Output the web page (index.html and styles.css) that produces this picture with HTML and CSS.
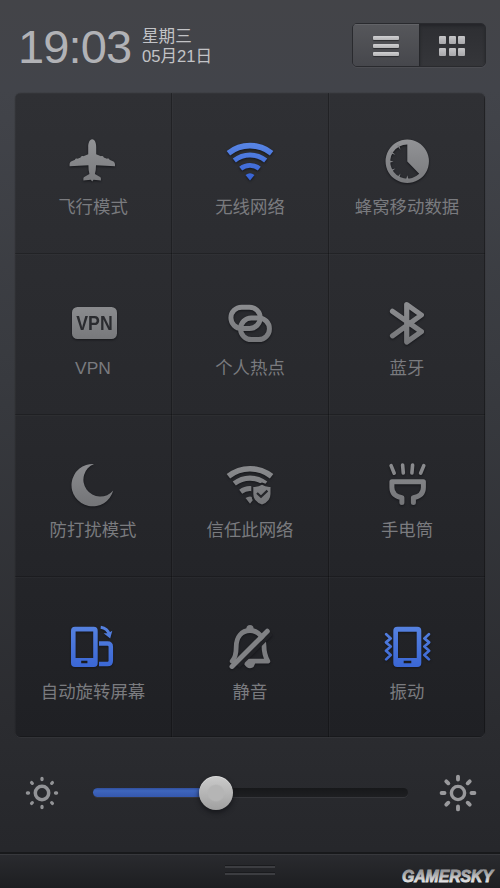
FILE: index.html
```html
<!DOCTYPE html>
<html lang="zh-CN">
<head>
<meta charset="utf-8">
<title>控制中心</title>
<link rel="stylesheet" href="styles.css">
</head>
<body>
<svg class="defs" width="0" height="0" aria-hidden="true">
  <defs>
    <linearGradient id="g1" gradientUnits="userSpaceOnUse" x1="0" y1="139" x2="0" y2="184"><stop offset="0" stop-color="#929396"/><stop offset="1" stop-color="#78797c"/></linearGradient>
    <linearGradient id="g2" gradientUnits="userSpaceOnUse" x1="0" y1="301" x2="0" y2="345"><stop offset="0" stop-color="#8e8f92"/><stop offset="1" stop-color="#747578"/></linearGradient>
    <linearGradient id="g3" gradientUnits="userSpaceOnUse" x1="0" y1="463" x2="0" y2="507"><stop offset="0" stop-color="#8b8c8f"/><stop offset="1" stop-color="#737477"/></linearGradient>
    <linearGradient id="b1" gradientUnits="userSpaceOnUse" x1="0" y1="141" x2="0" y2="181"><stop offset="0" stop-color="#5b88e6"/><stop offset="1" stop-color="#3560d2"/></linearGradient>
    <linearGradient id="b4" gradientUnits="userSpaceOnUse" x1="0" y1="626" x2="0" y2="668"><stop offset="0" stop-color="#5682e0"/><stop offset="1" stop-color="#3a66d4"/></linearGradient>
  </defs>
</svg>
<main class="screen">
  <header class="header">
    <div class="time">19:03</div>
    <div class="date"><span>星期三</span><span>05月21日</span></div>
    <div class="toggle">
      <div class="tab tab-list"><i></i><i></i><i></i></div>
      <div class="tab tab-grid"><i></i><i></i><i></i><i></i><i></i><i></i></div>
    </div>
  </header>

  <section class="panel">
    <div class="cell">
      <svg class="icon" viewBox="67 135 52 52" fill="url(#g1)"><path d="M92.2 139.3C95 139.3 96.2 143.5 96.2 147V154.3L101 156.3C101.4 155.6 103.6 155.8 103.8 157.5L107 158.8C107.6 158.1 109.4 158.4 109.5 159.8L113.5 161.5Q115.3 162.5 115 166.3L96 165.2Q96 171 94.9 174L100.5 177.2Q101.2 178 100.9 180.4L93.6 179.8L92.2 181.6L90.8 179.8L83.4 180.4Q83.1 178 83.8 177.2L89.4 174Q88.4 171 88.4 165.2L69.6 166.3Q69.2 162.5 71 161.5L75 159.8C75.1 158.4 76.8 158.1 77.5 158.8L80.6 157.5C80.8 155.8 83 155.6 83.4 156.3L88.2 154.3V147C88.2 143.5 89.4 139.3 92.2 139.3Z"/></svg>
      <span class="label">飞行模式</span>
    </div>
    <div class="cell">
      <svg class="icon" viewBox="224 135 52 52"><g fill="none" stroke="url(#b1)" stroke-width="5.6"><path d="M228.4 153.2A34.7 34.7 0 0 1 271.6 153.2"/><path d="M234.3 160.5A25.3 25.3 0 0 1 265.7 160.5" stroke-width="5.1"/><path d="M240.7 168.6A15.2 15.2 0 0 1 259.3 168.6" stroke-width="4.9"/></g><path fill="url(#b1)" d="M245.5 174.9Q250 171.7 254.5 174.9L250 180.5Z"/></svg>
      <span class="label">无线网络</span>
    </div>
    <div class="cell">
      <svg class="icon" viewBox="381 135 52 52"><path fill="url(#g1)" fill-rule="evenodd" d="M407.3 139.6A21.7 21.7 0 1 1 407.2 139.6ZM407.3 144.6A17 17 0 1 0 419.2 173.7L407.3 161.6Z"/><path fill="#828386" d="M389.5 160.4L393.6 161.6L389.5 162.8ZM406.1 179.4L407.3 175.3L408.5 179.4ZM391.3 151.2L395.4 154.8L390.1 153.3ZM396.9 145.6L400.5 149.7L399 144.4ZM390.1 169.9L395.4 168.4L391.3 172ZM396.9 177.6L400.5 173.5L399 178.8Z"/></svg>
      <span class="label">蜂窝移动数据</span>
    </div>

    <div class="cell">
      <svg class="icon" viewBox="67 296 52 52"><rect x="72" y="307" width="45" height="32" rx="5.5" fill="url(#g2)"/><text class="vpn" x="76.3" y="329.6" textLength="36.4" lengthAdjust="spacingAndGlyphs">VPN</text></svg>
      <span class="label">VPN</span>
    </div>
    <div class="cell">
      <svg class="icon" viewBox="224 296 52 52" fill="none" stroke="url(#g2)" stroke-width="5"><rect x="230.9" y="307.2" width="29.3" height="21.3" rx="10.7"/><rect x="240.6" y="318" width="28.8" height="21.6" rx="10.7"/></svg>
      <span class="label">个人热点</span>
    </div>
    <div class="cell">
      <svg class="icon" viewBox="381 296 52 52" fill="none" stroke="url(#g2)" stroke-width="5.2" stroke-linecap="round" stroke-linejoin="round"><path d="M392.5 311.3L421.4 331.7L406.7 342.1V304.5L421.4 315L392.5 335.8"/></svg>
      <span class="label">蓝牙</span>
    </div>

    <div class="cell low">
      <svg class="icon" viewBox="67 457 52 52" fill="url(#g3)"><path d="M94 464A21.2 21.2 0 1 0 113.2 490.6A16.9 16.9 0 1 1 94 464Z"/></svg>
      <span class="label">防打扰模式</span>
    </div>
    <div class="cell low">
      <svg class="icon" viewBox="224 457 52 52"><defs><mask id="cut" maskUnits="userSpaceOnUse" x="224" y="457" width="52" height="52"><rect x="224" y="457" width="52" height="52" fill="#fff"/><path d="M262 482.5L269 485L273 485V495Q272 504 262 507Q252 504 251.3 495V485.5L256 485Z" fill="#000"/></mask></defs><g mask="url(#cut)"><g fill="none" stroke="url(#g3)" stroke-width="5.6"><path d="M228.4 476.3A34.7 34.7 0 0 1 271.6 476.3"/><path d="M234.3 483.6A25.3 25.3 0 0 1 265.7 483.6" stroke-width="5.1"/><path d="M240.7 491.7A15.2 15.2 0 0 1 259.3 491.7" stroke-width="4.9"/></g><path fill="url(#g3)" d="M245.5 498Q250 494.8 254.5 498L250 503.7Z"/></g><path fill="url(#g3)" d="M262 484.8Q265.5 487.3 270.5 486.9V494Q270.5 501.5 262 504.5Q253.3 501.5 253.3 494V486.9Q258.5 487.3 262 484.8Z"/><path d="M257 493L261 496.8L267.4 490.6" fill="none" stroke="#25262a" stroke-width="2.2"/></svg>
      <span class="label">信任此网络</span>
    </div>
    <div class="cell low">
      <svg class="icon" viewBox="381 457 52 52" fill="none" stroke="url(#g3)"><path stroke-width="3.6" stroke-linecap="round" d="M391.1 465.6L394.2 473.2M402.6 465L403.3 473M412.6 465L411.9 473M423.8 465.6L420.6 473.2"/><path stroke-width="5" stroke-linejoin="round" stroke-linecap="round" d="M401.9 502.4V497.6C395.5 496.5 391.9 493 391.9 487.5V481.8H423.4V487.5C423.4 493 420 496.5 413.4 497.6V502.4"/></svg>
      <span class="label">手电筒</span>
    </div>

    <div class="cell low">
      <svg class="icon" viewBox="67 619 52 52"><path fill="none" stroke="url(#b4)" stroke-width="4.5" d="M99 643.4H107.5Q110.8 643.4 110.8 646.7V660.7Q110.8 664 107.5 664H99"/><path fill="url(#b4)" fill-rule="evenodd" d="M75 626.7H93.8Q97.7 626.7 97.7 630.7V663Q97.7 667 93.8 667H75Q71 667 71 663V630.7Q71 626.7 75 626.7ZM75.6 631.5V658H93.2V631.5ZM81.2 660.7V663.2H87.4V660.7Z"/><path fill="none" stroke="url(#b4)" stroke-width="2.9" d="M100.7 627.3Q107.7 628.2 109.4 634.8"/><path fill="url(#b4)" d="M103.6 633.3L108 633.2L112.3 630.7L110.2 638.4Z"/></svg>
      <span class="label">自动旋转屏幕</span>
    </div>
    <div class="cell low">
      <svg class="icon" viewBox="224 619 52 52"><g fill="none" stroke="#7c7d80" stroke-width="4.8" stroke-linecap="round" stroke-linejoin="round"><path d="M232.2 661.2C236 657 236.2 652 236.2 647C236.2 637 241.5 630.5 250 630.5C258 630.5 264 637 264 646C264 653 265.2 656.5 267.8 661.2H247"/></g><circle cx="250" cy="628.5" r="3.6" fill="#7c7d80"/><path d="M244.5 661.5H255.5Q254.7 668.2 250 668.2Q246.5 668.2 244.5 664.5Z" fill="#7c7d80"/><path stroke="#212226" stroke-width="4" d="M238 666.5L271.5 633.5"/><path stroke="#818285" stroke-width="5" stroke-linecap="round" d="M232 666.4L267.3 631.2"/></svg>
      <span class="label">静音</span>
    </div>
    <div class="cell low">
      <svg class="icon" viewBox="381 619 52 52"><path fill="url(#b4)" fill-rule="evenodd" d="M397.3 626.7H417.3Q421.3 626.7 421.3 630.7V663Q421.3 667 417.3 667H397.3Q393.3 667 393.3 663V630.7Q393.3 626.7 397.3 626.7ZM398 631.8V658H416.7V631.8ZM403.7 660.8V663.2H411.3V660.8Z"/><path fill="none" stroke="url(#b4)" stroke-width="2.7" stroke-linecap="round" stroke-linejoin="round" d="M386.2 634.2L390.7 638.4L386 642.4L390.7 646.6L386 650.8L390.7 655L386.2 659.4M428.9 634.2L424.4 638.4L429.1 642.4L424.4 646.6L429.1 650.8L424.4 655L428.9 659.4"/></svg>
      <span class="label">振动</span>
    </div>
  </section>

  <section class="brightness">
    <svg class="sun" viewBox="-20 -20 40 40" fill="none" stroke="#929396" stroke-linecap="round"><circle r="6.7" stroke-width="3.5"/><path stroke-width="3.3" d="M0-14.6V-13.5M0 14.6V13.5M-14.6 0H-13.5M14.6 0H13.5M-10.4-10.4L-9.7-9.7M10.4-10.4L9.7-9.7M-10.4 10.4L-9.7 9.7M10.4 10.4L9.7 9.7"/></svg>
    <div class="track"><div class="fill"></div><div class="knob"></div></div>
    <svg class="sun" viewBox="-20 -20 40 40" fill="none" stroke="#99999c" stroke-linecap="round"><circle r="6.6" stroke-width="3.4"/><path stroke-width="3.9" d="M0-16.4V-13.5M0 16.4V13.5M-16.4 0H-13.5M16.4 0H13.5M-11.7-11.7L-9.7-9.7M11.7-11.7L9.7-9.7M-11.7 11.7L-9.7 9.7M11.7 11.7L9.7 9.7"/></svg>
  </section>

  <footer class="footer">
    <div class="grip"><i></i><i></i></div>
    <svg class="brand" viewBox="0 0 96 20"><defs><linearGradient id="br" x1="0" y1="0" x2="0" y2="1"><stop offset="0.2" stop-color="#98999b"/><stop offset="0.8" stop-color="#e0e0e1"/></linearGradient></defs><text x="2" y="14.8" textLength="91" lengthAdjust="spacingAndGlyphs" fill="url(#br)" stroke="url(#br)">GAMERSKY</text></svg>
  </footer>
</main>
</body>
</html>
```

FILE: styles.css
```css
* { box-sizing: border-box; }

body {
  margin: 0;
  font-family: "Liberation Sans", "Noto Sans CJK SC", sans-serif;
}

.defs { position: absolute; }

.screen {
  width: 500px;
  height: 888px;
  display: flex;
  flex-direction: column;
  overflow: hidden;
  background: linear-gradient(#434448 0, #42444a 90px, #383a3f 380px, #2b2c30 720px, #26272b 850px);
}

.header {
  height: 93px;
  flex: none;
  display: flex;
  align-items: flex-start;
  padding: 23px 14px 0 18px;
}

.time {
  width: 124px;
  margin-top: -3px;
  color: #b1b2b6;
  font-size: 47px;
  line-height: 54px;
  letter-spacing: -0.9px;
  white-space: nowrap;
}

.date {
  display: flex;
  flex-direction: column;
  padding-top: 4px;
  color: #c2c3c6;
  font-size: 16.6px;
  line-height: 19.5px;
}

.toggle {
  width: 134px;
  height: 44px;
  margin-left: auto;
  display: flex;
  border: 1px solid #292a2e;
  border-radius: 5px;
  overflow: hidden;
  box-shadow: 0 1px 0 #4c4d52;
}

.tab { flex: 1; }

.tab-list {
  display: flex;
  flex-direction: column;
  align-items: center;
  gap: 4px;
  padding-top: 12px;
  background: linear-gradient(#56575b, #46474c);
  box-shadow: inset 0 1px 0 #626367;
}

.tab-list i {
  width: 26px;
  height: 4px;
  border-radius: 1px;
  background: linear-gradient(#d0d0d2, #b4b4b6);
  box-shadow: 0 1px 1px #2c2d30;
}

.tab-grid {
  display: grid;
  grid-template-columns: repeat(3, 7px);
  grid-auto-rows: 8px;
  justify-content: center;
  gap: 4px 2.5px;
  padding-top: 12px;
  background: linear-gradient(#2d2e32, #35363a);
  border-left: 1px solid #25262a;
  box-shadow: inset 0 2px 3px #242529;
}

.tab-grid i {
  border-radius: 1px;
  background: linear-gradient(#c5c5c7, #a8a8ab);
}

.panel {
  flex: none;
  width: 470px;
  height: 644px;
  margin: 0 15px;
  display: grid;
  grid-template-columns: 157px 157px 156px;
  grid-template-rows: 161px 161px 162px 160px;
  border-radius: 6px;
  overflow: hidden;
  background: linear-gradient(#2f3034, #28292d 50%, #1f2024);
  box-shadow: 0 0 1px #202124, 0 1px 0 #35363a;
}

.cell {
  display: flex;
  flex-direction: column;
  align-items: center;
  padding-top: 42px;
  box-shadow: inset -1px 0 rgba(0, 0, 0, 0.28), inset 1px 0 rgba(255, 255, 255, 0.025), inset 0 -1px rgba(0, 0, 0, 0.22), inset 0 1px rgba(255, 255, 255, 0.025);
}

.cell:nth-child(3n + 1),
.cell:nth-child(3n + 2) { padding-right: 1px; }

.icon {
  width: 52px;
  height: 52px;
  flex: none;
  filter: drop-shadow(0 1px 1px #15161a);
}

.label {
  margin-top: 8px;
  color: #7a7b7f;
  font-size: 17.4px;
  line-height: 24px;
  white-space: nowrap;
}

.low .label { margin-top: 9px; }

.vpn {
  fill: #2a2b2f;
  font-size: 19.5px;
  font-weight: bold;
}

.brightness {
  flex: none;
  height: 115px;
  display: flex;
  align-items: center;
  justify-content: space-between;
  padding: 0 22px 4px;
}

.sun {
  width: 40px;
  height: 40px;
  flex: none;
}

.track {
  position: relative;
  width: 315px;
  height: 9px;
  border-radius: 5px;
  background: linear-gradient(#17181a, #1e1f22);
  box-shadow: 0 1px 0 #35363a;
}

.fill {
  width: 130px;
  height: 9px;
  border-radius: 5px;
  background: linear-gradient(#304e9c, #3e66bd 30%, #3557ad);
}

.knob {
  position: absolute;
  left: 106px;
  top: -12px;
  width: 34px;
  height: 34px;
  border-radius: 50%;
  background: radial-gradient(circle, #b5b5b5 0, #b5b5b5 7.5px, transparent 9px), linear-gradient(#cbcbcb, #a0a0a0);
  box-shadow: 0 3px 5px #17181c, inset 0 1px #dadada;
}

.footer {
  flex: none;
  height: 36px;
  display: flex;
  align-items: flex-start;
  justify-content: flex-end;
  border-top: 2px solid #18191b;
  box-shadow: inset 0 1px #37383c;
  background: linear-gradient(#2a2b2f, #1d1e21);
}

.grip {
  width: 50px;
  margin: 12px 125px 0 0;
  display: flex;
  flex-direction: column;
  gap: 5px;
}

.grip i {
  height: 2px;
  background: #3c3d41;
  box-shadow: 0 -1px #1a1b1e;
}

.brand {
  width: 96px;
  height: 20px;
  margin: 13px 4px 0 0;
}

.brand text {
  font-size: 16px;
  font-weight: bold;
  font-style: italic;
  stroke-width: 0.9px;
}
```
